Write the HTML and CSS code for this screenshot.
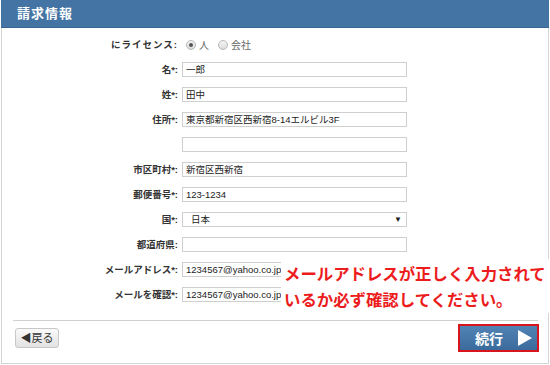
FILE: index.html
```html
<!DOCTYPE html>
<html lang="ja">
<head>
<meta charset="utf-8">
<link rel="stylesheet" href="styles.css">
</head>
<body>
<div class="panel">
  <div class="panel-head">請求情報</div>
  <div class="form">
    <div class="label wide">にライセンス:</div>
    <div class="radios">
      <span class="radio on"></span><span class="rlabel">人</span>
      <span class="radio"></span><span class="rlabel">会社</span>
    </div>
    <div class="label">名*:</div><div class="input">一郎</div>
    <div class="label">姓*:</div><div class="input">田中</div>
    <div class="label">住所*:</div><div class="input">東京都新宿区西新宿8-14エルビル3F</div>
    <div class="label"></div><div class="input"></div>
    <div class="label">市区町村*:</div><div class="input">新宿区西新宿</div>
    <div class="label">郵便番号*:</div><div class="input">123-1234</div>
    <div class="label">国*:</div><div class="input select"><span>日本</span><span class="arrow">▼</span></div>
    <div class="label">都道府県:</div><div class="input"></div>
    <div class="label">メールアドレス*:</div><div class="input">1234567@yahoo.co.jp</div>
    <div class="label">メールを確認*:</div><div class="input">1234567@yahoo.co.jp</div>
  </div>
  <div class="sep"></div>
  <div class="footer">
    <div class="btn-back">◀戻る</div>
    <div class="btn-next"><span>続行</span><svg width="16" height="18" viewBox="0 0 16 18"><path d="M1 1 L15 9 L1 17 Z" fill="#fff"/></svg></div>
  </div>
  <div class="note">メールアドレスが正しく入力されて<br>いるか必ず確認してください。</div>
</div>
</body>
</html>
```
FILE: styles.css
```css
* { box-sizing: border-box; }
html, body { margin: 0; padding: 0; background: #fff; }
body {
  width: 550px;
  height: 365px;
  font-family: "Liberation Sans", "Noto Sans CJK JP", sans-serif;
  color: #333;
}
.panel {
  position: relative;
  margin-left: 1px;
  width: 548px;
  height: 364px;
  border: 1px solid #d4d4d4;
  border-top: none;
}
.panel-head {
  height: 28px;
  margin: 0 -1px;
  background: #4474a3;
  border-bottom: 1px solid #3a6590;
  color: #fff;
  font-size: 13px;
  font-weight: bold;
  line-height: 27px;
  padding-left: 16px;
  letter-spacing: 1px;
}
.form {
  display: grid;
  grid-template-columns: 176px 225px;
  column-gap: 4px;
  row-gap: 10px;
  padding-top: 9px;
}
.label {
  height: 15px;
  font-size: 9.5px;
  font-weight: bold;
  line-height: 15px;
  text-align: right;
  color: #333;
  white-space: nowrap;
}
.label.wide { letter-spacing: 1px; }
.radios {
  height: 15px;
  display: flex;
  align-items: center;
  gap: 3px;
  margin-bottom: -2px;
  font-size: 10px;
  color: #666;
}
.radio {
  width: 10px;
  height: 10px;
  border-radius: 50%;
  border: 1px solid #b8b8b8;
  background: linear-gradient(#f4f4f4, #dcdcdc);
  margin-left: 4px;
  position: relative;
}
.radio.on::after {
  content: "";
  position: absolute;
  left: 2px;
  top: 2px;
  width: 4px;
  height: 4px;
  border-radius: 50%;
  background: #555;
}
.rlabel { margin-right: 2px; }
.input {
  height: 15px;
  border: 1px solid #cfcfcf;
  background: #fff;
  font-size: 9.5px;
  line-height: 13px;
  padding-left: 3px;
  color: #222;
  white-space: nowrap;
  overflow: hidden;
}
.select {
  display: flex;
  justify-content: space-between;
  padding-left: 8px;
  padding-right: 4px;
}
.arrow { font-size: 8px; color: #222; }
.sep {
  margin: 18px 10px 0 11px;
  border-top: 1px solid #d0d0d0;
}
.footer {
  display: flex;
  justify-content: space-between;
  align-items: flex-start;
  padding: 3px 9px 0 13px;
}
.btn-back {
  margin-top: 4px;
  width: 44px;
  height: 20px;
  border: 1px solid #c8c8c8;
  border-radius: 3px;
  background: linear-gradient(#fafafa, #e2e2e2);
  font-size: 11px;
  line-height: 18px;
  text-align: center;
  color: #333;
}
.btn-next {
  width: 81px;
  height: 28px;
  border: 2px solid #d8141c;
  background: linear-gradient(#5283b5, #3b6b9c);
  display: flex;
  align-items: center;
  gap: 14px;
  padding-left: 15px;
  color: #fff;
  font-size: 14px;
  font-weight: bold;
}
.note {
  position: absolute;
  left: 279px;
  top: 259px;
  padding: 2px 4px 0 3px;
  background: #fff;
  color: #ec1c1c;
  font-size: 16.4px;
  font-weight: bold;
  line-height: 26px;
  white-space: nowrap;
}
```
